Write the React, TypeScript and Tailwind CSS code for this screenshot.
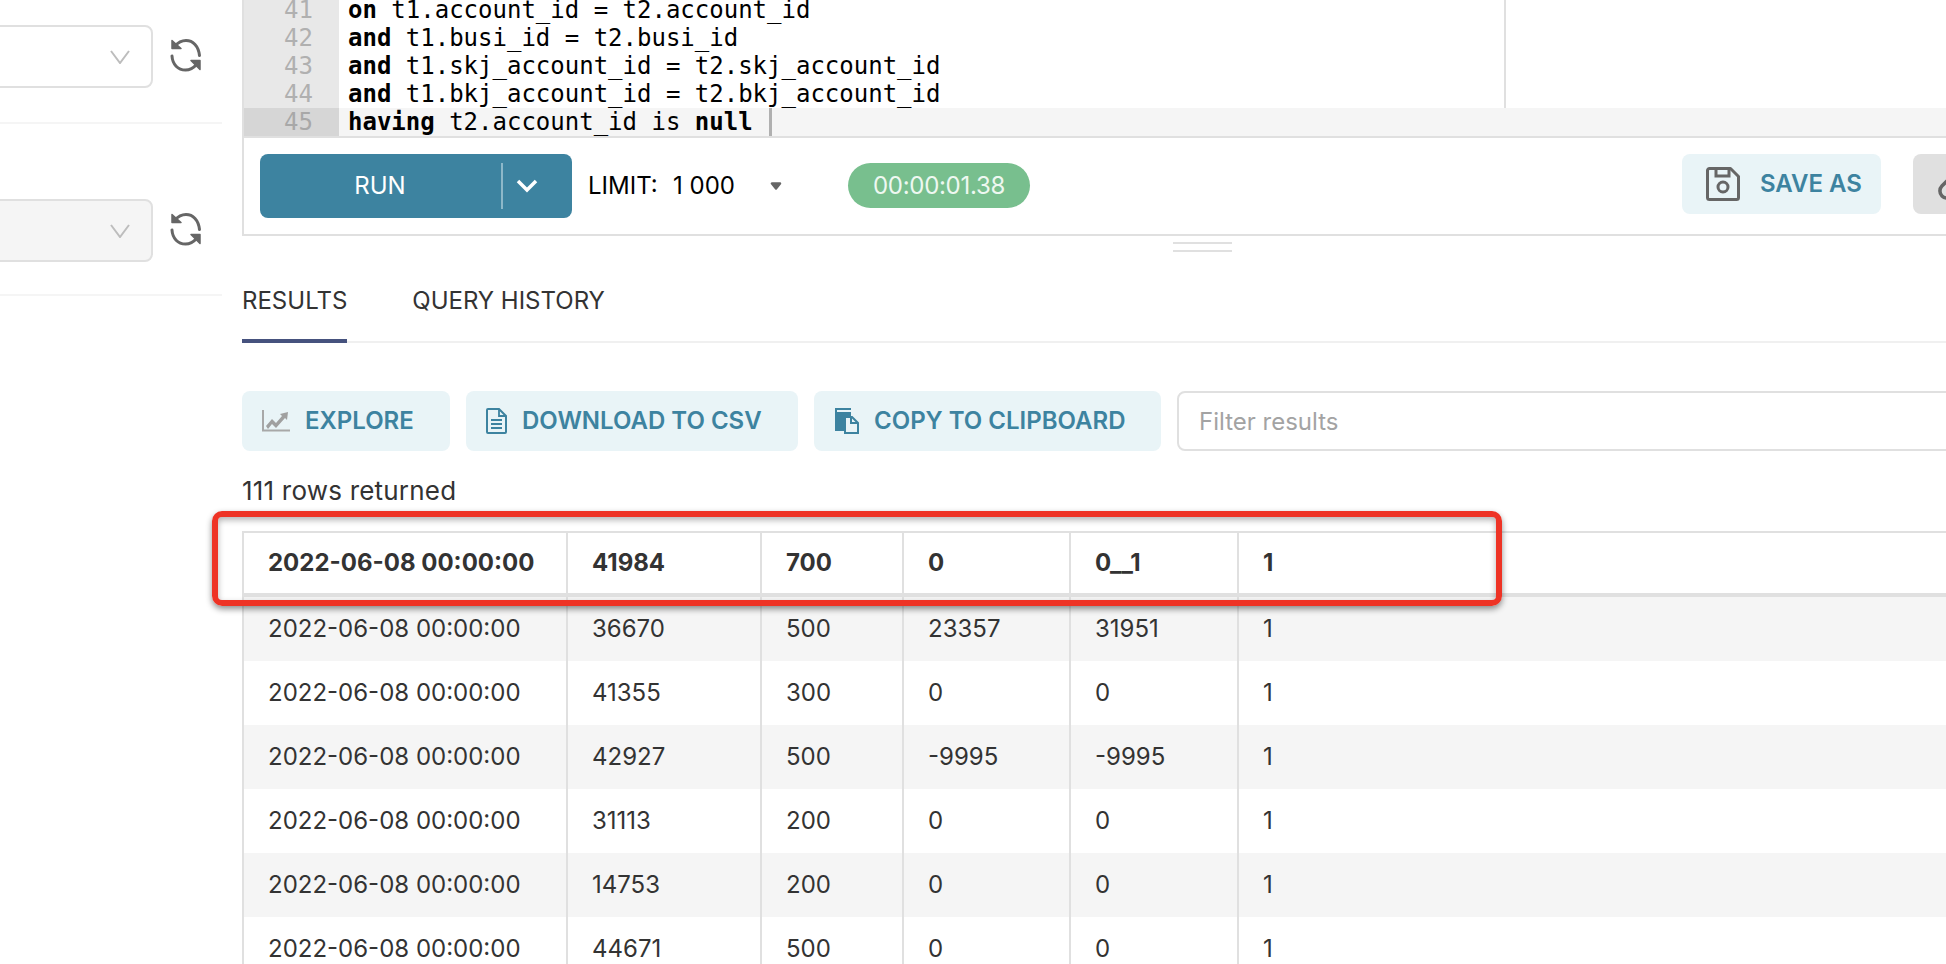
import { Link } from "lucide-react";

const codeLines = [
  { no: 41, kw: "on", rest: " t1.account_id = t2.account_id" },
  { no: 42, kw: "and", rest: " t1.busi_id = t2.busi_id" },
  { no: 43, kw: "and", rest: " t1.skj_account_id = t2.skj_account_id" },
  { no: 44, kw: "and", rest: " t1.bkj_account_id = t2.bkj_account_id" },
];

const rows = [
  ["2022-06-08 00:00:00", "36670", "500", "23357", "31951", "1"],
  ["2022-06-08 00:00:00", "41355", "300", "0", "0", "1"],
  ["2022-06-08 00:00:00", "42927", "500", "-9995", "-9995", "1"],
  ["2022-06-08 00:00:00", "31113", "200", "0", "0", "1"],
  ["2022-06-08 00:00:00", "14753", "200", "0", "0", "1"],
  ["2022-06-08 00:00:00", "44671", "500", "0", "0", "1"],
];

const SyncIcon = () => (
  <svg className="-mt-[3px]" width="32" height="34" viewBox="0 0 32 34" fill="none" stroke="#666" strokeWidth="3" strokeLinecap="round">
    <path d="M5 8C8 4.500 11.500 2.500 16 2.500c7 0 12.500 5.500 13.500 15" />
    <path d="M2 18c.5 8.500 6 14 13.500 14 4.500 0 8-2 11-5.500" />
    <path d="M2 2.500v8h9z" fill="#666" stroke="#666" strokeWidth="1.500" strokeLinejoin="round" />
    <path d="M30 31.500v-9h-9z" fill="#666" stroke="#666" strokeWidth="1.500" strokeLinejoin="round" />
  </svg>
);

const Combo = ({ muted }: { muted?: boolean }) => (
  <div className="flex items-center gap-[17px]">
    <div
      className={`-ml-[10px] flex h-[63px] w-[163px] items-center justify-end rounded-lg border-2 border-[#e0e0e0] pr-[21px] ${
        muted ? "bg-[#f5f5f5]" : "bg-white"
      }`}
    >
      <svg width="20" height="14" viewBox="0 0 20 14" fill="none" stroke="#bdbdbd" strokeWidth="2">
        <path d="M1 1l9 12 9-12" />
      </svg>
    </div>
    <SyncIcon />
  </div>
);

const ActionButton = ({ width, icon, label }: { width: string; icon: React.ReactNode; label: string }) => (
  <button className={`flex h-[60px] shrink-0 items-center rounded-lg bg-[#e9f4f7] pl-[20px] font-semibold text-[#3d83a0] ${width}`}>
    {icon}
    {label}
  </button>
);

const cellWidths = ["w-[324px]", "w-[194px]", "w-[142px]", "w-[167px]", "w-[168px]", "flex-1"];

const Row = ({ cells, className }: { cells: string[]; className: string }) => (
  <div className={`flex ${className}`}>
    {cells.map((c, i) => (
      <div
        key={i}
        className={`flex items-center pl-[24px] ${cellWidths[i]} ${i < 5 ? "border-r-2 border-[#e0e0e0]" : ""}`}
      >
        {c}
      </div>
    ))}
  </div>
);

export default function App() {
  return (
    <div className="flex h-[964px] w-[1946px] overflow-hidden bg-white font-['Inter',sans-serif] text-[24px] text-[#333]">
      {/* Sidebar, scrolled so only the ends of the selects show */}
      <aside className="w-[242px] shrink-0 pt-[25px]">
        <Combo />
        <div className="mt-[34px] h-[2px] w-[222px] bg-[#f5f5f5]" />
        <div className="mt-[75px]">
          <Combo muted />
        </div>
        <div className="mt-[32px] h-[2px] w-[222px] bg-[#f5f5f5]" />
      </aside>

      <main className="w-[1800px] shrink-0">
        {/* Editor */}
        <div className="-mt-[4px] border-x-2 border-b-2 border-[#e0e0e0] font-['DejaVu_Sans_Mono',monospace] text-[24px] leading-[28px] text-black">
          {codeLines.map((l) => (
            <div key={l.no} className="flex h-[28px]">
              <div className="w-[95px] bg-[#e8e8e8] pr-[26px] text-right text-[#b0b0b0]">{l.no}</div>
              <div className="w-[1167px] whitespace-pre border-r-2 border-[#e0e0e0] pl-[9px]">
                <b>{l.kw}</b>
                {l.rest}
              </div>
            </div>
          ))}
          <div className="flex h-[28px] bg-[#f5f5f5]">
            <div className="w-[95px] bg-[#d6d6d6] pr-[26px] text-right text-[#a8a8a8]">45</div>
            <div className="flex whitespace-pre pl-[9px]">
              <b>having</b> t2.account_id is <b>null</b>
              <span className="ml-[16px] h-[28px] w-[3px] bg-[#b0b0b0]" />
            </div>
          </div>
        </div>

        {/* Toolbar */}
        <div className="flex h-[98px] items-center border-x-2 border-b-2 border-[#e0e0e0] pl-[16px]">
          <div className="flex h-[64px] w-[312px] shrink-0 items-center rounded-lg bg-[#3d83a0] text-white">
            <span className="w-[240px] text-center">RUN</span>
            <span className="ml-[1px] h-[46px] w-[2px] bg-[#8db8c9]" />
            <svg className="ml-[13px]" width="22" height="14" viewBox="0 0 22 14" fill="none" stroke="#fff" strokeWidth="3.5">
              <path d="M2 2l9 9 9-9" />
            </svg>
          </div>
          <span className="ml-[16px] w-[85px] text-black">LIMIT:</span>
          <span className="w-[97px] text-black">1 000</span>
          <svg width="12" height="8" viewBox="0 0 12 8" fill="#666">
            <path d="M2 1.500h8L6 6.500z" stroke="#666" strokeWidth="2.500" strokeLinejoin="round" />
          </svg>
          <span className="ml-[66px] -mt-[1px] flex h-[45px] w-[182px] items-center justify-center rounded-full bg-[#78bf8e] tracking-[-0.3px] text-[#eef8f1]">
            00:00:01.38
          </span>
          <button className="ml-[652px] -mt-[4px] flex h-[60px] w-[199px] shrink-0 items-center rounded-lg bg-[#e9f4f7] pl-[24px] font-semibold text-[#3d83a0]">
            <svg className="mr-[20px]" width="34" height="34" viewBox="0 0 34 34" fill="none" stroke="#666" strokeWidth="3">
              <path d="M3.500 1.500h21l8 8v21a2 2 0 0 1-2 2h-27a2 2 0 0 1-2-2v-27a2 2 0 0 1 2-2z" strokeLinejoin="round" />
              <path d="M10 2v7h13V2" />
              <circle cx="17" cy="20" r="5" />
            </svg>
            SAVE AS
          </button>
          <button className="ml-[32px] -mt-[4px] flex h-[60px] w-[100px] shrink-0 items-center rounded-lg bg-[#e0e0e0] pl-[24px]">
            <Link size={34} color="#666" strokeWidth={2.5} />
          </button>
        </div>

        {/* Resize handle */}
        <div className="ml-[931px] mt-[6px] h-[10px] w-[59px] border-y-2 border-[#e0e0e0]" />

        {/* Tabs */}
        <div className="flex h-[91px] items-end border-b-2 border-[#f0f0f0] leading-[26px]">
          <div className="-mb-[2px] border-b-4 border-[#46527e] pb-[25px]">RESULTS</div>
          <div className="-mb-[2px] ml-[65px] pb-[29px]">QUERY HISTORY</div>
        </div>

        {/* Result actions */}
        <div className="mt-[48px] flex gap-[16px]">
          <ActionButton
            width="w-[208px]"
            label="EXPLORE"
            icon={
              <svg className="mr-[15px]" width="28" height="22" viewBox="0 0 28 22" fill="none">
                <path d="M1 0v20.500h27" stroke="#a8a8a8" strokeWidth="2" />
                <path d="M4 16l6-7 4 4 6-7-2-2 8-2-1 8-2-2-9 10-4-4-4 5z" fill="#a0a0a0" />
              </svg>
            }
          />
          <ActionButton
            width="w-[332px]"
            label="DOWNLOAD TO CSV"
            icon={
              <svg className="mr-[15px]" width="21" height="26" viewBox="0 0 21 26" fill="none" stroke="#3d83a0" strokeWidth="2">
                <path d="M2 1h11l7 7v16a1 1 0 0 1-1 1H2a1 1 0 0 1-1-1V2a1 1 0 0 1 1-1z" />
                <path d="M13 1v7h7M5 12h11M5 16h11M5 20h11" strokeWidth="1.800" />
              </svg>
            }
          />
          <ActionButton
            width="w-[347px]"
            label="COPY TO CLIPBOARD"
            icon={
              <svg className="mr-[15px]" width="25" height="26" viewBox="0 0 25 26" fill="none">
                <path d="M1 0h16v2H3v2h14v4H10v15H1z" fill="#3d83a0" />
                <path d="M11 9h7l6 6v10H11z" fill="#e9f4f7" stroke="#3d83a0" strokeWidth="2" />
                <path d="M17 9v6h7" stroke="#3d83a0" strokeWidth="2" />
              </svg>
            }
          />
          <input
            readOnly
            placeholder="Filter results"
            className="h-[60px] w-[800px] shrink-0 rounded-lg border-2 border-[#e0e0e0] bg-white pl-[20px] text-[24px] outline-none placeholder:text-[#a3a3a3]"
          />
        </div>

        <div className="mt-[27px] text-[26px] leading-[26px] tracking-[0.2px]">111 rows returned</div>

        {/* Results table */}
        <div className="relative mt-[27px] border-l-2 border-t-2 border-[#e0e0e0]">
          <Row
            cells={["2022-06-08 00:00:00", "41984", "700", "0", "0__1", "1"]}
            className="h-[64px] border-b-4 border-[#e0e0e0] font-bold"
          />
          {rows.map((r, i) => (
            <Row key={i} cells={r} className={`h-[64px] ${i % 2 === 0 ? "bg-[#f5f5f5]" : "bg-white"}`} />
          ))}

          {/* Red annotation drawn over the header row */}
          <div className="absolute -left-[32px] -top-[22px] h-[95px] w-[1290px] rounded-[10px] border-[6px] border-[#ee3325] shadow-[0_3px_6px_rgba(0,0,0,0.45),inset_0_3px_6px_rgba(0,0,0,0.3)]" />
        </div>
      </main>
    </div>
  );
}
